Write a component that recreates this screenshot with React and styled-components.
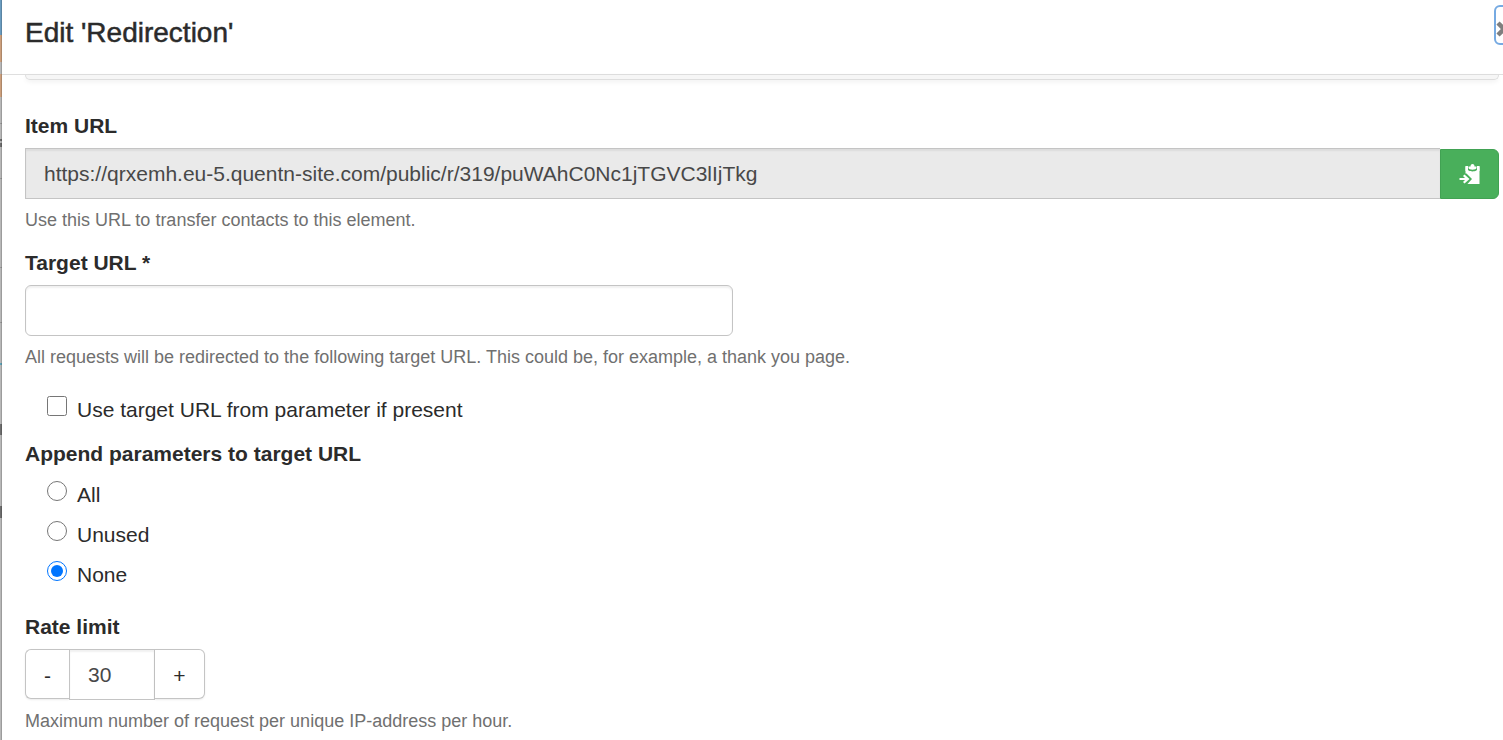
import { useState } from "react";
import styled, { createGlobalStyle } from "styled-components";

const App = () => {
  const [append, setAppend] = useState("none");
  const [rate, setRate] = useState(30);

  return (
    <>
      <GlobalStyle />
      <Page>
        <Backdrop />
        <Dialog>
          <Header>
            <Title>Edit 'Redirection'</Title>
            <CloseButton type="button" aria-label="Close">
              <svg width="16" height="16" viewBox="0 0 16 16">
                <path d="M2 2L14 14M14 2L2 14" stroke="#7f7f7f" strokeWidth="4.5" />
              </svg>
            </CloseButton>
          </Header>
          <PanelEdge />
          <Form>
            <Field>
              <Label htmlFor="item-url">Item URL</Label>
              <InputGroup>
                <UrlInput
                  id="item-url"
                  readOnly
                  value="https://qrxemh.eu-5.quentn-site.com/public/r/319/puWAhC0Nc1jTGVC3lIjTkg"
                />
                <CopyButton type="button" aria-label="Copy URL">
                  <svg width="22" height="22" viewBox="0 0 22 22">
                    <path
                      d="M6.500 3.500H20.500V21H6.500V3.500Z"
                      fill="#fff"
                    />
                    <path
                      d="M7 2.500H19V5C19 9.500 8 9.500 8 5Z"
                      fill="#49af5b"
                    />
                    <path
                      d="M6.500 3H9V8H6.500ZM18 3H20.500V8H18Z"
                      fill="#fff"
                    />
                    <path
                      d="M9.500 3.500H11.500C11.500 0.300 15.500 0.300 15.500 3.500H17.500V5C17 7.300 10 7.300 9.500 5Z"
                      fill="#fff"
                    />
                    <path
                      d="M4 10.500H7.500L13 16L8 21.500H4Z"
                      fill="#49af5b"
                    />
                    <path
                      d="M0.500 15H6L4 13L5.500 11.500L10.500 16L5.500 20.500L4 19L6 17H0.500Z"
                      fill="#fff"
                    />
                  </svg>
                </CopyButton>
              </InputGroup>
              <Help>Use this URL to transfer contacts to this element.</Help>
            </Field>

            <Field>
              <Label htmlFor="target-url">Target URL *</Label>
              <TargetInput id="target-url" />
              <Help>
                All requests will be redirected to the following target URL.
                This could be, for example, a thank you page.
              </Help>
            </Field>

            <CheckRow>
              <Option>
                <Tick type="checkbox" />
                Use target URL from parameter if present
              </Option>
            </CheckRow>

            <OptionField>
              <Legend>Append parameters to target URL</Legend>
              <Options>
                {["All", "Unused", "None"].map((name) => (
                  <Option key={name}>
                    <Tick
                      type="radio"
                      name="append"
                      checked={append === name.toLowerCase()}
                      onChange={() => setAppend(name.toLowerCase())}
                    />
                    {name}
                  </Option>
                ))}
              </Options>
            </OptionField>

            <Field>
              <Label htmlFor="rate-limit">Rate limit</Label>
              <Stepper>
                <StepButton
                  type="button"
                  $side="left"
                  onClick={() => setRate(rate - 1)}
                >
                  -
                </StepButton>
                <StepInput
                  id="rate-limit"
                  value={rate}
                  onChange={(e) => setRate(Number(e.target.value) || 0)}
                />
                <StepButton
                  type="button"
                  $side="right"
                  onClick={() => setRate(rate + 1)}
                >
                  +
                </StepButton>
              </Stepper>
              <Help>Maximum number of request per unique IP-address per hour.</Help>
            </Field>
          </Form>
        </Dialog>
      </Page>
    </>
  );
};

const GlobalStyle = createGlobalStyle`
  * {
    box-sizing: border-box;
  }
  body {
    margin: 0;
    overflow: hidden;
    background: #fff;
    color: #2b2b2b;
    font-family: "Liberation Sans", Arial, sans-serif;
    font-size: 21px;
    line-height: 30px;
  }
  button,
  input {
    font: inherit;
    color: inherit;
    margin: 0;
  }
`;

const Page = styled.div`
  display: flex;
  min-height: 100vh;
`;

/* sliver of the dimmed page left of the dialog */
const Backdrop = styled.div`
  flex: 0 0 2px;
  border-right: 1px solid rgba(0, 0, 0, 0.15);
  background: linear-gradient(
    #6a9cc0 0 35px,
    #cc9f7c 35px 62px,
    #b8b8b8 62px 74px,
    #cc9f7c 74px 97px,
    #b8b8b8 97px 123px,
    #989898 123px 124px,
    #b8b8b8 124px 139px,
    #6e6e6e 139px 141px,
    #b8b8b8 141px 143px,
    #6e6e6e 143px 147px,
    #b8b8b8 147px 178px,
    #989898 178px 179px,
    #b8b8b8 179px 267px,
    #989898 267px 268px,
    #b8b8b8 268px 322px,
    #989898 322px 323px,
    #b8b8b8 323px 363px,
    #5fa3b8 363px 365px,
    #b8b8b8 365px 424px,
    #6e6e6e 424px 435px,
    #b8b8b8 435px 506px,
    #6e6e6e 506px 518px,
    #b8b8b8 518px
  );
`;

const Dialog = styled.main`
  flex: 1;
  min-width: 0;
  overflow: hidden;
`;

const Header = styled.header`
  display: flex;
  justify-content: space-between;
  align-items: flex-start;
  height: 75px;
  padding: 5px 0 0 23px;
  border-bottom: 1px solid #dfdfdf;
`;

const Title = styled.h1`
  margin: 8px 0 0;
  font-size: 28px;
  font-weight: 500;
  line-height: 40px;
  -webkit-text-stroke: 0.5px #2b2b2b;
`;

const CloseButton = styled.button`
  display: flex;
  align-items: center;
  width: 24px;
  height: 40px;
  margin-right: -15px;
  padding: 8px 0 0;
  border: 2px solid #76aae2;
  border-radius: 6px;
  background: #fff;
`;

/* bottom of the panel scrolled under the header */
const PanelEdge = styled.div`
  height: 5px;
  margin: 0 4px 0 23px;
  border: 1px solid #dedede;
  border-top: 0;
  border-radius: 0 0 6px 6px;
  background: #f6f6f6;
  box-shadow: 0 2px 5px rgba(0, 0, 0, 0.06);
`;

const Form = styled.form`
  padding: 31px 4px 0 23px;
`;

const Field = styled.div`
  margin-bottom: 15px;
`;

const Label = styled.label`
  display: block;
  margin-bottom: 7px;
  font-weight: bold;
`;

const Help = styled.p`
  margin: 8px 0 0;
  color: #707070;
  font-size: 18px;
  line-height: 26px;
`;

const InputGroup = styled.div`
  display: flex;
`;

const Input = styled.input`
  height: 51px;
  padding: 0 18px;
  border: 1px solid #c4c4c4;
  background: #fff;
  box-shadow: inset 0 2px 2px rgba(0, 0, 0, 0.06);
  color: #484848;
  outline: 0;
`;

const UrlInput = styled(Input)`
  flex: 1;
  min-width: 0;
  border-right: 0;
  background: #eaeaea;
`;

const CopyButton = styled.button`
  display: flex;
  align-items: center;
  justify-content: center;
  width: 59px;
  height: 50px;
  margin-top: 1px;
  padding: 0;
  border: 1px solid #41a253;
  border-radius: 0 6px 6px 0;
  background: #49af5b;
`;

const TargetInput = styled(Input)`
  display: block;
  width: 48%;
  border-radius: 6px;
`;

const CheckRow = styled.div`
  margin: 25px 0 14px;
`;

const OptionField = styled.fieldset`
  margin: 0 0 22px;
  padding: 0;
  border: 0;
`;

const Legend = styled.legend`
  padding: 0;
  margin-bottom: 11px;
  font-weight: bold;
`;

const Options = styled.div`
  display: grid;
  gap: 10px;
`;

const Option = styled.label`
  display: flex;
  align-items: flex-start;
  gap: 10px;
  padding-left: 22px;
`;

const Tick = styled.input`
  width: 20px;
  height: 20px;
  margin-top: 1px;
  accent-color: #0075ff;
`;

const Stepper = styled.div`
  display: flex;
`;

const StepButton = styled.button`
  width: ${({ $side }) => ($side === "left" ? "44px" : "50px")};
  height: 50px;
  padding: 4px 0 0;
  border: 1px solid #c4c4c4;
  border-${({ $side }) => ($side === "left" ? "right" : "left")}: 0;
  border-radius: ${({ $side }) =>
    $side === "left" ? "6px 0 0 6px" : "0 6px 6px 0"};
  background: #fff;
  box-shadow: 0 1px 2px rgba(0, 0, 0, 0.08);
`;

const StepInput = styled(Input)`
  width: 86px;
`;

export default App;
